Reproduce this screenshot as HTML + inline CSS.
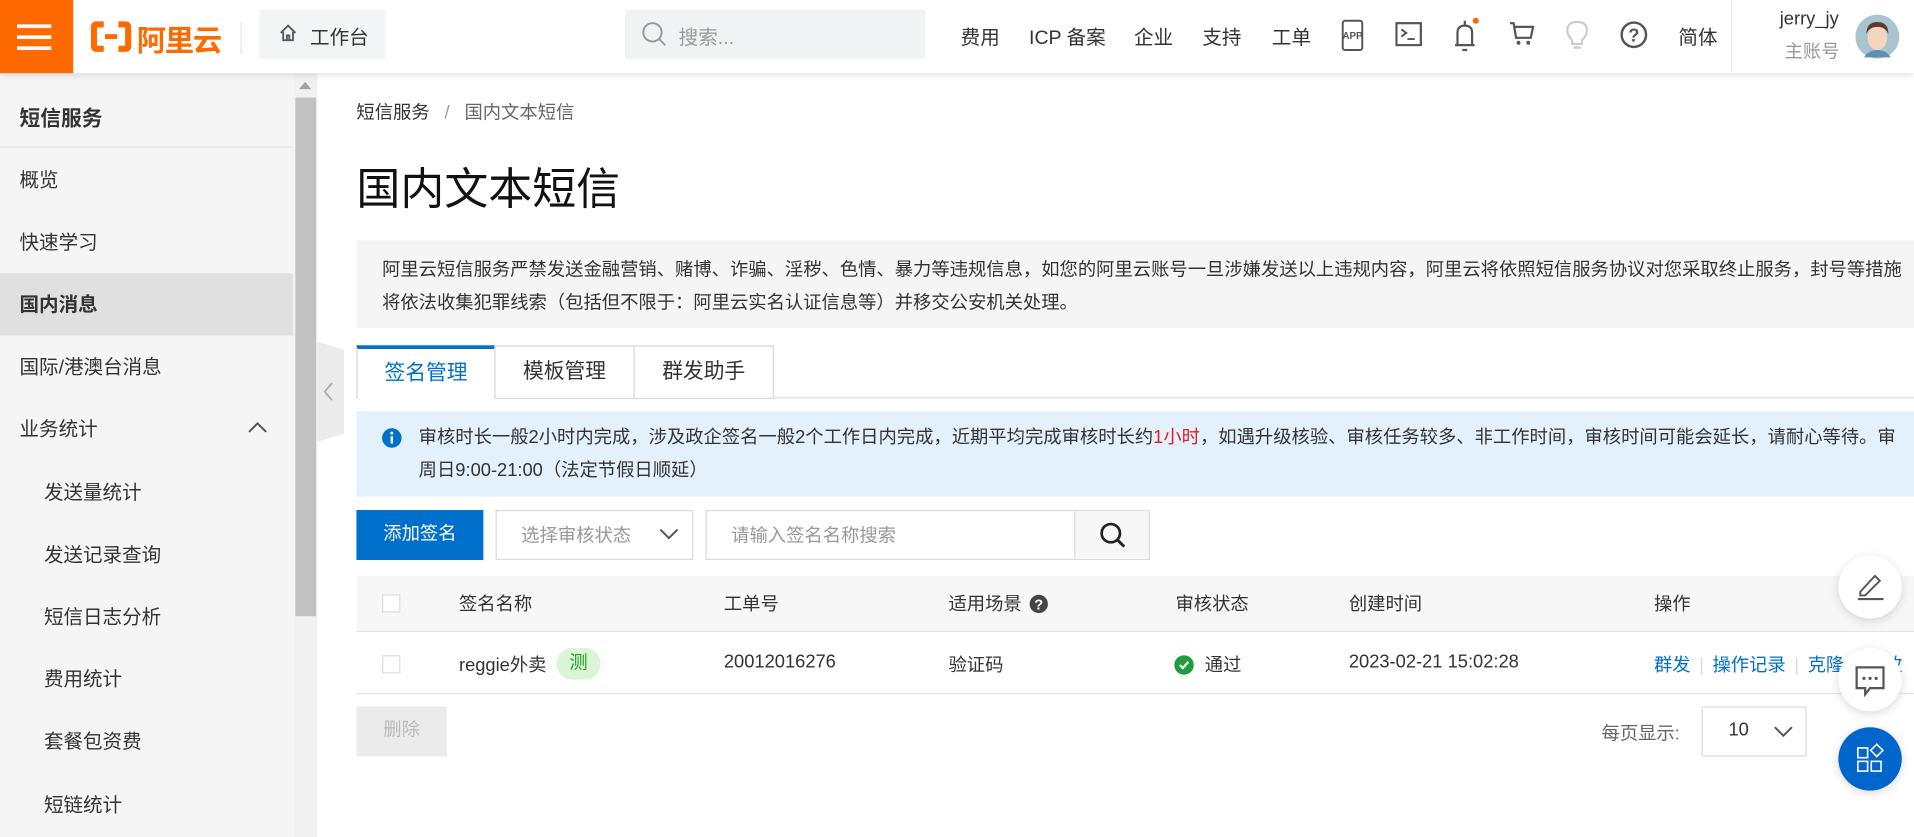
<!DOCTYPE html>
<html><head><meta charset="utf-8"><style>
*{margin:0;padding:0;box-sizing:border-box}
html,body{width:1914px;height:837px;overflow:hidden;background:#fff}
#w{position:absolute;left:0;top:0;width:1568px;height:686px;transform:scale(1.22066,1.22012);transform-origin:0 0;font-family:"Liberation Sans","Noto Sans CJK SC",sans-serif;color:#333;font-size:15px}
.a{position:absolute;white-space:nowrap}
.top{position:absolute;left:0;top:0;width:1568px;height:60px;background:#fff;box-shadow:0 2px 5px rgba(0,0,0,.12);z-index:5}
.nav{top:17px;font-size:16px;color:#333}
.side{position:absolute;left:0;top:60px;width:241px;height:626px;background:#f5f5f5}
.si{left:16px;font-size:16px;color:#333}
.sub{left:36px}
.tab{position:absolute;top:283px;height:44px;border:1px solid #d7d7d7;background:#fff;font-size:17px;text-align:center;line-height:42px;color:#333}
.th{top:484px;font-size:15px;color:#333}
.td{top:534px;font-size:15px;color:#333}
.cb{position:absolute;width:15px;height:15px;border:1px solid #ddd;background:#fff}
.fb{position:absolute;left:1506px;width:52px;height:52px;border-radius:50%;background:#fff;box-shadow:0 2px 8px rgba(0,0,0,.15)}
</style></head><body><div id="w">
<div class="top">
 <div class="a" style="left:0;top:0;width:60px;height:60px;background:#ff6a00">
  <div class="a" style="left:14px;top:20px;width:28px;height:3px;background:#fff"></div>
  <div class="a" style="left:14px;top:29px;width:28px;height:3px;background:#fff"></div>
  <div class="a" style="left:14px;top:38px;width:28px;height:3px;background:#fff"></div>
 </div>
 <svg class="a" style="left:74px;top:17px" width="34" height="26" viewBox="0 0 34 26"><path d="M11 3H5Q3 3 3 5V21Q3 23 5 23H11M23 3H29Q31 3 31 5V21Q31 23 29 23H23" fill="none" stroke="#ff6a00" stroke-width="5"/><rect x="12" y="11" width="10" height="4" fill="#ff6a00"/></svg>
 <div class="a" style="left:112px;top:14px;font-size:24px;font-weight:bold;color:#ff6a00;letter-spacing:-1px">阿里云</div>
 <div class="a" style="left:197px;top:18px;width:1px;height:26px;background:#e5e5e5"></div>
 <div class="a" style="left:212px;top:8px;width:104px;height:40px;background:#f3f4f6;border-radius:2px"></div>
 <svg class="a" style="left:228px;top:19px" width="16" height="16" viewBox="0 0 16 16"><path d="M2 8L8 2L14 8M4 7V14H12V7M7 14V10H9V14" fill="none" stroke="#555" stroke-width="1.5"/></svg>
 <div class="a" style="left:254px;top:17px;font-size:16px">工作台</div>
 <div class="a" style="left:512px;top:8px;width:246px;height:40px;background:#f1f2f4"></div>
 <svg class="a" style="left:525px;top:17px" width="22" height="22" viewBox="0 0 22 22"><circle cx="9.5" cy="9.5" r="7.5" fill="none" stroke="#999" stroke-width="1.6"/><path d="M15 15L20 20" stroke="#999" stroke-width="1.6"/></svg>
 <div class="a" style="left:556px;top:17px;font-size:16px;color:#999">搜索...</div>
 <div class="a nav" style="left:787px">费用</div>
 <div class="a nav" style="left:843px">ICP 备案</div>
 <div class="a nav" style="left:929px">企业</div>
 <div class="a nav" style="left:985px">支持</div>
 <div class="a nav" style="left:1042px">工单</div>
 <svg class="a" style="left:1097px;top:16px" width="22" height="26" viewBox="0 0 22 26"><rect x="3" y="1" width="16" height="24" rx="2" fill="none" stroke="#555" stroke-width="1.6"/><text x="11" y="16" font-size="8" font-weight="bold" text-anchor="middle" fill="#555" font-family="Liberation Sans">APP</text></svg>
 <svg class="a" style="left:1143px;top:18px" width="22" height="20" viewBox="0 0 22 20"><rect x="1" y="1" width="20" height="18" fill="none" stroke="#555" stroke-width="1.8"/><path d="M5 6L9 9L5 12M10 14H16" fill="none" stroke="#555" stroke-width="1.6"/></svg>
 <svg class="a" style="left:1189px;top:13px" width="24" height="30" viewBox="0 0 24 30"><path d="M5 24V14Q5 8 11 8Q17 8 17 14V24M3 24H19M11 4V8M9 28H13" fill="none" stroke="#555" stroke-width="1.8"/><circle cx="20" cy="4" r="2.5" fill="#ff6a00"/></svg>
 <svg class="a" style="left:1236px;top:17px" width="22" height="22" viewBox="0 0 22 22"><path d="M1 2H4L6 14H18L20 5H5" fill="none" stroke="#555" stroke-width="1.8"/><circle cx="8" cy="18" r="1.6" fill="#555"/><circle cx="16" cy="18" r="1.6" fill="#555"/></svg>
 <svg class="a" style="left:1282px;top:16px" width="20" height="26" viewBox="0 0 20 26"><path d="M6 17Q2 13 2 9Q2 2 10 2Q18 2 18 9Q18 13 14 17V20H6Z" fill="none" stroke="#ccc" stroke-width="1.8"/><path d="M7 23H13" stroke="#ccc" stroke-width="2"/></svg>
 <svg class="a" style="left:1327px;top:17px" width="23" height="23" viewBox="0 0 23 23"><circle cx="11.5" cy="11.5" r="10" fill="none" stroke="#555" stroke-width="2"/><text x="11.5" y="17" font-size="15" font-weight="bold" text-anchor="middle" fill="#555" font-family="Liberation Sans">?</text></svg>
 <div class="a nav" style="left:1375px">简体</div>
 <div class="a" style="left:1418px;top:0;width:1px;height:60px;background:#eee"></div>
 <div class="a" style="left:1458px;top:7px;font-size:15px;color:#333">jerry_jy</div>
 <div class="a" style="left:1462px;top:31px;font-size:15px;color:#999">主账号</div>
 <svg class="a" style="left:1519px;top:11px" width="38" height="38" viewBox="0 0 38 38"><circle cx="19" cy="19" r="18" fill="#a9c3d1"/><ellipse cx="19" cy="20" rx="8" ry="10" fill="#f5d5bd"/><path d="M10 17Q10 7 19 7Q28 7 28 17Q26 11 19 11Q12 11 10 17Z" fill="#5a3a2a"/><path d="M8 36Q12 30 19 30Q26 30 30 36" fill="#5d8fb5"/></svg>
</div>
<div class="side">
 <div class="a si" style="top:23px;font-weight:bold;font-size:17px">短信服务</div>
 <div class="a" style="left:0;top:60px;width:240px;height:1px;background:#e2e2e2"></div>
 <div class="a si" style="top:74px">概览</div>
 <div class="a si" style="top:125px">快速学习</div>
 <div class="a" style="left:0;top:164px;width:240px;height:51px;background:#e0e0e0"></div>
 <div class="a si" style="top:176px;font-weight:bold">国内消息</div>
 <div class="a si" style="top:227px">国际/港澳台消息</div>
 <div class="a si" style="top:278px">业务统计</div>
 <svg class="a" style="left:203px;top:285px" width="16" height="10" viewBox="0 0 16 10"><path d="M1 9L8 2L15 9" fill="none" stroke="#555" stroke-width="1.6"/></svg>
 <div class="a si sub" style="top:330px">发送量统计</div>
 <div class="a si sub" style="top:381px">发送记录查询</div>
 <div class="a si sub" style="top:432px">短信日志分析</div>
 <div class="a si sub" style="top:483px">费用统计</div>
 <div class="a si sub" style="top:534px">套餐包资费</div>
 <div class="a si sub" style="top:586px">短链统计</div>
</div>
<div class="a" style="left:241px;top:60px;width:19px;height:626px;background:#f1f1f1"></div>
<div class="a" style="left:242px;top:80px;width:17px;height:425px;background:#c1c1c1"></div>
<svg class="a" style="left:244px;top:66px" width="12" height="8"><path d="M6 1L11 7H1Z" fill="#a3a3a3"/></svg>
<div class="a" style="left:260px;top:280px;width:22px;height:82px;background:#ebebeb;clip-path:polygon(0 0,100% 8%,100% 92%,0 100%)"></div>
<svg class="a" style="left:264px;top:313px" width="10" height="16"><path d="M8 1L2 8L8 15" fill="none" stroke="#aaa" stroke-width="1.4"/></svg>

<div class="a" style="left:292px;top:81px;font-size:15px;color:#333">短信服务 <span style="color:#999;margin:0 8px">/</span> <span style="color:#666">国内文本短信</span></div>
<div class="a" style="left:292px;top:126px;font-size:36px;color:#111">国内文本短信</div>
<div class="a" style="left:292px;top:197px;width:1276px;height:72px;background:#f5f5f5"></div>
<div class="a" style="left:313px;top:208px;font-size:15px;line-height:27px;color:#333">阿里云短信服务严禁发送金融营销、赌博、诈骗、淫秽、色情、暴力等违规信息，如您的阿里云账号一旦涉嫌发送以上违规内容，阿里云将依照短信服务协议对您采取终止服务，封号等措施<br>将依法收集犯罪线索（包括但不限于：阿里云实名认证信息等）并移交公安机关处理。</div>

<div class="a" style="left:292px;top:325px;width:1276px;height:2px;background:#eaeaea"></div>
<div class="tab" style="left:292px;width:114px;border-top:3px solid #0070cc;border-bottom:none;color:#0070cc;line-height:40px;height:44px">签名管理</div>
<div class="tab" style="left:405px;width:115px">模板管理</div>
<div class="tab" style="left:519px;width:115px">群发助手</div>

<div class="a" style="left:292px;top:337px;width:1276px;height:70px;background:#e3f1fd"></div>
<svg class="a" style="left:312px;top:350px" width="18" height="18"><circle cx="9" cy="9" r="8" fill="#0070cc"/><rect x="8" y="7.5" width="2" height="6" fill="#fff"/><circle cx="9" cy="5" r="1.2" fill="#fff"/></svg>
<div class="a" style="left:343px;top:345px;font-size:15px;line-height:27px;color:#333">审核时长一般2小时内完成，涉及政企签名一般2个工作日内完成，近期平均完成审核时长约<span style="color:#e02020">1小时</span>，如遇升级核验、审核任务较多、非工作时间，审核时间可能会延长，请耐心等待。审<br>周日9:00-21:00（法定节假日顺延）</div>

<div class="a" style="left:292px;top:418px;width:104px;height:41px;background:#0070cc;color:#fff;font-size:15px;text-align:center;line-height:40px">添加签名</div>
<div class="a" style="left:406px;top:418px;width:162px;height:41px;border:1px solid #dcdcdc"></div>
<div class="a" style="left:427px;top:428px;font-size:15px;color:#999">选择审核状态</div>
<svg class="a" style="left:539px;top:432px" width="18" height="12"><path d="M2 2L9 9L16 2" fill="none" stroke="#555" stroke-width="1.6"/></svg>
<div class="a" style="left:578px;top:418px;width:364px;height:41px;border:1px solid #dcdcdc"></div>
<div class="a" style="left:880px;top:419px;width:61px;height:39px;background:#f7f7f7;border-left:1px solid #dcdcdc"></div>
<div class="a" style="left:599px;top:428px;font-size:15px;color:#999">请输入签名名称搜索</div>
<svg class="a" style="left:900px;top:427px" width="24" height="24"><circle cx="10" cy="10" r="7.5" fill="none" stroke="#222" stroke-width="2.2"/><path d="M15.5 15.5L21 21" stroke="#222" stroke-width="2.4"/></svg>

<div class="a" style="left:292px;top:472px;width:1276px;height:46px;background:#f7f7f7;border-bottom:1px solid #e5e5e5"></div>
<div class="cb" style="left:313px;top:487px"></div>
<div class="a th" style="left:376px">签名名称</div>
<div class="a th" style="left:593px">工单号</div>
<div class="a th" style="left:777px">适用场景</div>
<svg class="a" style="left:843px;top:487px" width="16" height="16"><circle cx="8" cy="8" r="7.5" fill="#444"/><text x="8" y="12.5" font-size="12" font-weight="bold" text-anchor="middle" fill="#fff" font-family="Liberation Sans">?</text></svg>
<div class="a th" style="left:963px">审核状态</div>
<div class="a th" style="left:1105px">创建时间</div>
<div class="a th" style="left:1355px">操作</div>
<div class="a" style="left:292px;top:568px;width:1276px;height:1px;background:#e5e5e5"></div>
<div class="cb" style="left:313px;top:537px"></div>
<div class="a td" style="left:376px">reggie外卖</div>
<div class="a" style="left:456px;top:531px;width:36px;height:26px;border-radius:13px;background:#d9f5d6;color:#1ea01e;text-align:center;font-size:15px;line-height:26px">测</div>
<div class="a td" style="left:593px">20012016276</div>
<div class="a td" style="left:777px">验证码</div>
<svg class="a" style="left:962px;top:537px" width="16" height="16"><circle cx="8" cy="8" r="8" fill="#1e9e3a"/><path d="M4.5 8L7 10.5L11.5 5.5" fill="none" stroke="#fff" stroke-width="1.8"/></svg>
<div class="a td" style="left:987px">通过</div>
<div class="a td" style="left:1105px">2023-02-21 15:02:28</div>
<div class="a td" style="left:1355px;color:#0070cc">群发<span style="color:#ddd;margin:0 7px">|</span>操作记录<span style="color:#ddd;margin:0 7px">|</span>克隆<span style="color:#ddd;margin:0 7px">|</span>修改</div>

<div class="a" style="left:292px;top:579px;width:74px;height:41px;background:#ebebeb;color:#bbb;font-size:15px;text-align:center;line-height:40px">删除</div>
<div class="a" style="left:1312px;top:590px;font-size:15px;color:#666">每页显示:</div>
<div class="a" style="left:1394px;top:579px;width:86px;height:41px;border:1px solid #dcdcdc;background:#fff"></div>
<div class="a" style="left:1416px;top:590px;font-size:15px;color:#333">10</div>
<svg class="a" style="left:1452px;top:594px" width="18" height="12"><path d="M2 2L9 9L16 2" fill="none" stroke="#555" stroke-width="1.6"/></svg>

<div class="fb" style="top:455px"></div>
<svg class="a" style="left:1518px;top:466px" width="28" height="28"><path d="M6 19L18 6L22 10L10 22H6Z" fill="none" stroke="#555" stroke-width="1.6"/><path d="M4 25H25" stroke="#555" stroke-width="1.8"/></svg>
<div class="fb" style="top:531px"></div>
<svg class="a" style="left:1518px;top:544px" width="28" height="28"><path d="M3 3H25V20H14L10 25V20H3Z" fill="none" stroke="#555" stroke-width="1.8"/><circle cx="9" cy="12" r="1.3" fill="#555"/><circle cx="14" cy="12" r="1.3" fill="#555"/><circle cx="19" cy="12" r="1.3" fill="#555"/></svg>
<div class="fb" style="top:596px;background:#0066cc"></div>
<svg class="a" style="left:1519px;top:608px" width="28" height="28"><rect x="3" y="5" width="8" height="8" fill="none" stroke="#fff" stroke-width="1.3"/><rect x="3" y="16" width="8" height="8" fill="none" stroke="#fff" stroke-width="1.3"/><rect x="14" y="16" width="8" height="8" fill="none" stroke="#fff" stroke-width="1.3"/><path d="M18.5 2L23.5 7L18.5 12L13.5 7Z" fill="none" stroke="#fff" stroke-width="1.3"/></svg>
</div></body></html>
